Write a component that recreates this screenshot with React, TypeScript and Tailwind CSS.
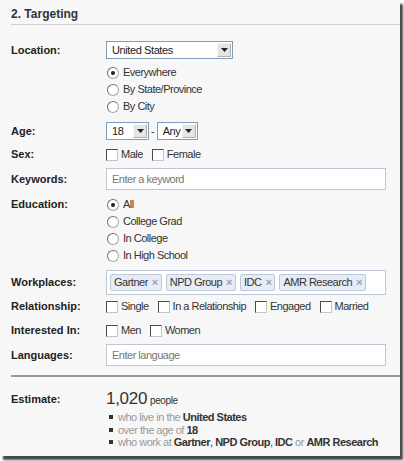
import React from 'react';

const font = "font-['Liberation_Sans',Arial,sans-serif]";

const Radio: React.FC<{ checked?: boolean; label: string }> = ({ checked, label }) => (
  <div className="flex items-center h-[17px]">
    <span className="ml-[1px] w-[12px] h-[12px] rounded-full border border-[#a8a8a8] border-t-[#707070] border-l-[#707070] bg-white flex items-center justify-center">
      {checked && <span className="w-[4px] h-[4px] rounded-full bg-[#222]" />}
    </span>
    <span className="ml-[4px] text-[11px] tracking-[-0.5px] text-[#333]">{label}</span>
  </div>
);

const Check: React.FC<{ label: string }> = ({ label }) => (
  <div className="flex items-center mr-[9px] whitespace-nowrap">
    <span className="w-[12px] h-[12px] border border-[#4a4a4a] border-r-[#c4c4c4] border-b-[#c4c4c4] bg-white" />
    <span className="ml-[3px] text-[11px] tracking-[-0.5px] text-[#333]">{label}</span>
  </div>
);

const Select: React.FC<{ value: string; width: string }> = ({ value, width }) => (
  <div className={`${width} h-[18px] border border-[#7f9db9] bg-white flex items-center justify-between pl-[5px] pr-[1px]`}>
    <span className="text-[11px] tracking-[-0.4px] text-[#222]">{value}</span>
    <span className="w-[14px] h-[14px] bg-[#e4e4e4] border border-[#b0b0b0] border-t-[#f7f7f7] border-l-[#f7f7f7] flex items-center justify-center">
      <svg width="7" height="4" viewBox="0 0 7 4"><path d="M0 0h7L3.5 4z" fill="#222" /></svg>
    </span>
  </div>
);

const Label: React.FC<{ children: React.ReactNode }> = ({ children }) => (
  <div className="w-[95px] shrink-0 text-[11px] font-bold text-[#222]">{children}</div>
);

const Token: React.FC<{ name: string }> = ({ name }) => (
  <span className="h-[17px] flex items-center whitespace-nowrap px-[3px] mr-[4px] bg-[#e6ebf4] border border-[#bcc8de] rounded-[2px] text-[11px] tracking-[-0.5px] text-[#333]">
    {name}
    <span className="ml-[4px] text-[11px] text-[#8ea0c6] font-bold">×</span>
  </span>
);

const Bullet = () => <span className="inline-block w-[4px] h-[4px] bg-[#333] ml-[3px] mr-[5px] align-middle mb-[2px]" />;

export default function App() {
  return (
    <div className={`w-[404px] h-[461px] bg-white ${font}`}>
      <div className="w-[400px] h-[456px] bg-[#f7f7f7] shadow-[3px_4px_2px_rgba(40,40,40,0.85)] pl-[11px]">
        <div className="h-[25px] border-b border-[#cfcfcf] pt-[7px] text-[12px] font-bold text-[#333] leading-[14px]">
          2. Targeting
        </div>

        <div className="flex items-center mt-[16px] h-[18px]">
          <Label>Location:</Label>
          <Select value="United States" width="w-[127px]" />
        </div>
        <div className="ml-[95px] mt-[5px]">
          <Radio checked label="Everywhere" />
          <Radio label="By State/Province" />
          <Radio label="By City" />
        </div>

        <div className="flex items-center mt-[7px] h-[18px]">
          <Label>Age:</Label>
          <Select value="18" width="w-[43px]" />
          <span className="mx-[2px] text-[11px] text-[#333]">-</span>
          <Select value="Any" width="w-[41px]" />
        </div>

        <div className="flex items-center mt-[6px] h-[17px]">
          <Label>Sex:</Label>
          <Check label="Male" />
          <Check label="Female" />
        </div>

        <div className="flex items-center mt-[5px] h-[22px]">
          <Label>Keywords:</Label>
          <div className="w-[280px] h-[22px] border border-[#bdc7d8] bg-white flex items-center pl-[5px] text-[11px] tracking-[-0.5px] text-[#777]">
            Enter a keyword
          </div>
        </div>

        <div className="flex mt-[6px]">
          <Label><div className="h-[17px] flex items-center">Education:</div></Label>
          <div>
            <Radio checked label="All" />
            <Radio label="College Grad" />
            <Radio label="In College" />
            <Radio label="In High School" />
          </div>
        </div>

        <div className="flex items-center mt-[6px] h-[25px]">
          <Label>Workplaces:</Label>
          <div className="w-[280px] h-[25px] border border-[#bdc7d8] bg-white flex items-center pl-[3px]">
            <Token name="Gartner" />
            <Token name="NPD Group" />
            <Token name="IDC" />
            <Token name="AMR Research" />
          </div>
        </div>

        <div className="flex items-center mt-[3px] h-[17px]">
          <Label>Relationship:</Label>
          <Check label="Single" />
          <Check label="In a Relationship" />
          <Check label="Engaged" />
          <Check label="Married" />
        </div>

        <div className="flex items-center mt-[7px] h-[17px]">
          <Label>Interested In:</Label>
          <Check label="Men" />
          <Check label="Women" />
        </div>

        <div className="flex items-center mt-[5px] h-[22px]">
          <Label>Languages:</Label>
          <div className="w-[280px] h-[22px] border border-[#bdc7d8] bg-white flex items-center pl-[5px] text-[11px] tracking-[-0.5px] text-[#777]">
            Enter language
          </div>
        </div>

        <div className="mt-[9px] h-[2px] bg-[#9a9a9a]" />

        <div className="flex mt-[13px]">
          <Label><div className="h-[18px] flex items-center">Estimate:</div></Label>
          <div>
            <div className="h-[18px] flex items-baseline text-[#333]">
              <span className="text-[17px] leading-[18px] tracking-[-0.3px]">1,020</span>
              <span className="ml-[3px] text-[10px] tracking-[-0.4px]">people</span>
            </div>
            <ul className="mt-[3px] text-[11px] leading-[12.5px] tracking-[-0.5px] text-[#999] whitespace-nowrap">
              <li><Bullet />who live in the <b className="text-[#333]">United States</b></li>
              <li><Bullet />over the age of <b className="text-[#333]">18</b></li>
              <li><Bullet />who work at <b className="text-[#333]">Gartner</b><span className="text-[#333]">, </span><b className="text-[#333]">NPD Group</b><span className="text-[#333]">, </span><b className="text-[#333]">IDC</b> or <b className="text-[#333]">AMR Research</b></li>
            </ul>
          </div>
        </div>
      </div>
    </div>
  );
}
